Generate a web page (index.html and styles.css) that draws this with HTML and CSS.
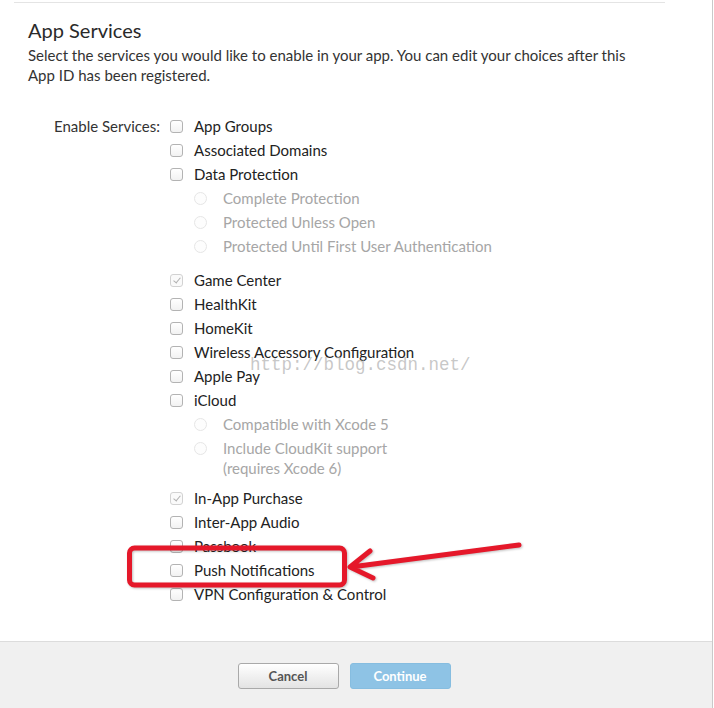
FILE: index.html
```html
<!DOCTYPE html>
<html>
<head>
<meta charset="utf-8">
<link rel="stylesheet" href="styles.css">
</head>
<body>
<div class="page">
  <div class="content">
    <div class="top-rule"></div>
    <h1 class="title">App Services</h1>
    <p class="desc">Select the services you would like to enable in your app. You can edit your choices after this App ID has been registered.</p>
    <div class="services">
      <div class="label">Enable Services:</div>
      <div class="list">
        <div class="row"><span class="cb"></span><span>App Groups</span></div>
        <div class="row"><span class="cb"></span><span>Associated Domains</span></div>
        <div class="row"><span class="cb"></span><span>Data Protection</span></div>
        <div class="sub sub-gap">
          <div class="row dis"><span class="rd"></span><span>Complete Protection</span></div>
          <div class="row dis"><span class="rd"></span><span>Protected Unless Open</span></div>
          <div class="row dis"><span class="rd"></span><span>Protected Until First User Authentication</span></div>
        </div>
        <div class="row"><span class="cb checked"></span><span>Game Center</span></div>
        <div class="row"><span class="cb"></span><span>HealthKit</span></div>
        <div class="row"><span class="cb"></span><span>HomeKit</span></div>
        <div class="row"><span class="cb"></span><span>Wireless Accessory Configuration</span></div>
        <div class="row"><span class="cb"></span><span>Apple Pay</span></div>
        <div class="row"><span class="cb"></span><span>iCloud</span></div>
        <div class="sub sub-gap-small">
          <div class="row dis"><span class="rd"></span><span>Compatible with Xcode 5</span></div>
          <div class="row dis"><span class="rd"></span><span>Include CloudKit support<br>(requires Xcode 6)</span></div>
        </div>
        <div class="row"><span class="cb checked"></span><span>In-App Purchase</span></div>
        <div class="row"><span class="cb"></span><span>Inter-App Audio</span></div>
        <div class="row"><span class="cb"></span><span>Passbook</span></div>
        <div class="row"><span class="cb"></span><span>Push Notifications</span></div>
        <div class="row"><span class="cb"></span><span>VPN Configuration &amp; Control</span></div>
      </div>
    </div>
  </div>
  <div class="footer">
    <button class="btn cancel">Cancel</button>
    <button class="btn continue">Continue</button>
  </div>
  <div class="watermark">http://blog.csdn.net/</div>
  <svg class="annot" width="714" height="708" viewBox="0 0 714 708">
    <rect x="129.5" y="548" width="215" height="37" rx="5" fill="none" stroke="#e5182a" stroke-width="5"/>
    <path d="M519 545 L351 567 M370 551 L350 567 L373 578" fill="none" stroke="#e5182a" stroke-width="5" stroke-linecap="round" stroke-linejoin="round"/>
  </svg>
</div>
</body>
</html>
```
FILE: styles.css
```css
* { box-sizing: border-box; }
html, body { margin: 0; padding: 0; background: #fff; }
body { font-family: Lato, "Open Sans", "Liberation Sans", sans-serif; color: #2a2a2a; }
.page {
  position: relative;
  width: 713px;
  height: 708px;
  border-right: 1px solid #c9c9c9;
  display: flex;
  flex-direction: column;
}
.content { flex: 1; padding: 2px 0 0 0; }
.top-rule { margin-left: 14px; width: 651px; border-top: 1px solid #e4e4e4; }
.title {
  margin: 14px 0 0 28px;
  font-size: 20px;
  font-weight: normal;
  line-height: 26px;
  color: #2a2a2a;
}
.desc {
  margin: 2px 0 0 28px;
  width: 615px;
  font-size: 15px;
  line-height: 20px;
  color: #333;
}
.services {
  display: flex;
  margin-top: 29px;
}
.label {
  width: 160px;
  text-align: right;
  font-size: 15px;
  line-height: 20px;
  padding-top: 2px;
  color: #333;
}
.list { margin-left: 10px; }
.row {
  display: flex;
  align-items: flex-start;
  font-size: 15px;
  line-height: 20px;
  padding: 2px 0;
  color: #222;
}
.cb {
  flex: none;
  width: 13px;
  height: 13px;
  margin-top: 4px;
  margin-right: 11px;
  border: 1px solid #b3b3b3;
  border-radius: 3px;
  background: linear-gradient(#fff, #f2f2f2);
  position: relative;
}
.cb.checked { border-color: #d2d2d2; background: #fafafa; }
.cb.checked::after {
  content: "";
  position: absolute;
  left: 3.5px;
  top: 1px;
  width: 3px;
  height: 6px;
  border-right: 1.3px solid #b0b0b0;
  border-bottom: 1.3px solid #b0b0b0;
  transform: rotate(40deg);
}
.sub { margin-left: 24px; }
.sub-gap { margin-bottom: 10px; }
.sub-gap-small { margin-bottom: 6px; }
.row.dis { color: #a6a6a6; }
.rd {
  flex: none;
  width: 13px;
  height: 13px;
  margin-top: 4px;
  margin-right: 16px;
  border: 1px solid #e6e6e6;
  border-radius: 50%;
  background: #fdfdfd;
}
.footer {
  height: 67px;
  border-top: 1px solid #dcdcdc;
  background: #f0f0f0;
  display: flex;
  justify-content: center;
  gap: 11px;
  padding-top: 21px;
  padding-right: 24px;
}
.btn {
  width: 101px;
  height: 26px;
  border-radius: 3px;
  font-family: Lato, "Open Sans", sans-serif;
  font-weight: bold;
  font-size: 13px;
  cursor: pointer;
}
.cancel {
  border: 1px solid #a9a9a9;
  background: linear-gradient(#ffffff, #e3e3e3);
  color: #555;
}
.continue {
  border: 1px solid #86bde0;
  background: #8ec3e5;
  color: #fff;
}
.watermark {
  position: absolute;
  left: 250px;
  top: 354px;
  font-family: "Liberation Mono", "DejaVu Sans Mono", monospace;
  font-size: 17.5px;
  line-height: 22px;
  color: rgba(175, 175, 175, 0.7);
  pointer-events: none;
}
.annot {
  position: absolute;
  left: 0;
  top: 0;
  pointer-events: none;
  filter: drop-shadow(1px 1px 1px rgba(0,0,0,0.25));
}
```
